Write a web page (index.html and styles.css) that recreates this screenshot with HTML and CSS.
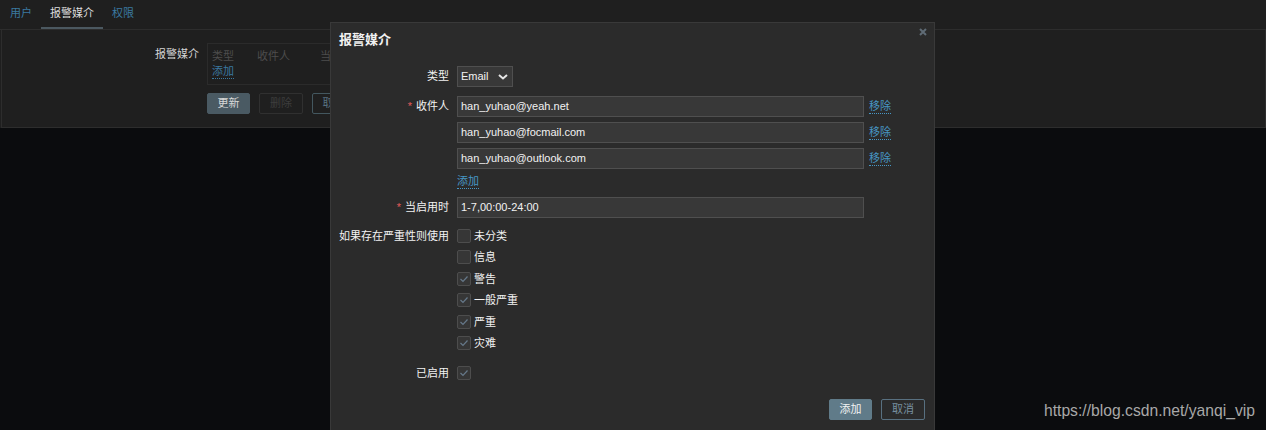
FILE: index.html
```html
<!DOCTYPE html>
<html lang="zh-CN">
<head>
<meta charset="utf-8">
<title>报警媒介</title>
<link rel="stylesheet" href="styles.css">
</head>
<body>
<div class="top">
  <div class="tabs">
    <a class="tab">用户</a><a class="tab active">报警媒介</a><a class="tab">权限</a>
  </div>
  <div class="tab-panel">
    <div class="bg-row">
      <div class="bg-label">报警媒介</div>
      <div class="bg-field">
        <div class="bg-table">
          <div class="bg-head"><span class="c1">类型</span><span class="c2">收件人</span><span class="c3">当启用时</span></div>
          <div><a class="link dim">添加</a></div>
        </div>
        <div class="bg-buttons">
          <button class="btn primary dimbtn">更新</button>
          <button class="btn disabled">删除</button>
          <button class="btn alt dimalt">取消</button>
        </div>
      </div>
    </div>
  </div>
</div>

<div class="modal">
  <div class="modal-head">
    <h4 class="modal-title">报警媒介</h4>
    <svg class="close" width="8" height="8" viewBox="0 0 8 8"><path d="M1 1L7 7M7 1L1 7" stroke="#5f6b75" stroke-width="2" fill="none"/></svg>
  </div>
  <div class="modal-body">
    <div class="row">
      <div class="label">类型</div>
      <div class="field">
        <div class="select"><span>Email</span>
          <svg width="10" height="6" viewBox="0 0 10 6"><path d="M1 1L5 4.5L9 1" stroke="#e6e6e6" stroke-width="2" fill="none"/></svg>
        </div>
      </div>
    </div>
    <div class="row mt9">
      <div class="label"><span class="req">*</span>收件人</div>
      <div class="field">
        <div class="inputs">
          <div class="input-line"><div class="input">han_yuhao@yeah.net</div><a class="link">移除</a></div>
          <div class="input-line"><div class="input">han_yuhao@focmail.com</div><a class="link">移除</a></div>
          <div class="input-line"><div class="input">han_yuhao@outlook.com</div><a class="link">移除</a></div>
        </div>
        <div class="add-line"><a class="link">添加</a></div>
      </div>
    </div>
    <div class="row mt8">
      <div class="label"><span class="req">*</span>当启用时</div>
      <div class="field"><div class="input">1-7,00:00-24:00</div></div>
    </div>
    <div class="row mt11">
      <div class="label short">如果存在严重性则使用</div>
      <div class="field">
        <div class="checks">
          <label class="check"><span class="box"></span>未分类</label>
          <label class="check"><span class="box"></span>信息</label>
          <label class="check"><span class="box"><svg width="14" height="14" viewBox="0 0 14 14"><path d="M3.5 7L6 9.5L10.5 4.5" stroke="#66798a" stroke-width="1.2" fill="none"/></svg></span>警告</label>
          <label class="check"><span class="box"><svg width="14" height="14" viewBox="0 0 14 14"><path d="M3.5 7L6 9.5L10.5 4.5" stroke="#66798a" stroke-width="1.2" fill="none"/></svg></span>一般严重</label>
          <label class="check"><span class="box"><svg width="14" height="14" viewBox="0 0 14 14"><path d="M3.5 7L6 9.5L10.5 4.5" stroke="#66798a" stroke-width="1.2" fill="none"/></svg></span>严重</label>
          <label class="check"><span class="box"><svg width="14" height="14" viewBox="0 0 14 14"><path d="M3.5 7L6 9.5L10.5 4.5" stroke="#66798a" stroke-width="1.2" fill="none"/></svg></span>灾难</label>
        </div>
      </div>
    </div>
    <div class="row mt16">
      <div class="label short">已启用</div>
      <div class="field">
        <label class="check"><span class="box"><svg width="14" height="14" viewBox="0 0 14 14"><path d="M3.5 7L6 9.5L10.5 4.5" stroke="#66798a" stroke-width="1.2" fill="none"/></svg></span></label>
      </div>
    </div>
    <div class="footer">
      <button class="btn primary w43">添加</button>
      <button class="btn alt w44">取消</button>
    </div>
  </div>
</div>

<div class="watermark">https://blog.csdn.net/yanqi_vip</div>
</body>
</html>
```
FILE: styles.css
```css
html, body {
  margin: 0;
  padding: 0;
}
body {
  width: 1266px;
  height: 430px;
  overflow: hidden;
  background: #0b0c0e;
  color: #f2f2f2;
  font-family: "Liberation Sans", "Noto Sans CJK SC", sans-serif;
  font-size: 11px;
  position: relative;
}

/* background page */
.top {
  background: #1f1f1f;
  height: 128px;
  box-sizing: border-box;
}
.tabs {
  display: flex;
  height: 29px;
  border-bottom: 1px solid #2d2d2d;
  padding-left: 1px;
}
.tab {
  display: block;
  padding: 0 9px;
  height: 29px;
  box-sizing: border-box;
  line-height: 27px;
  color: #3b7aa1;
  border-bottom: 2px solid transparent;
}
.tab.active {
  color: #dcdcdc;
  border-bottom-color: #4b5860;
}
.tab-panel {
  margin-left: 1px;
  height: 98px;
  box-sizing: border-box;
  border: 1px solid #2d2d2d;
  border-top: 0;
  padding-top: 13px;
}
.bg-row {
  display: grid;
  grid-template-columns: 197px 1fr;
  column-gap: 8px;
}
.bg-label {
  text-align: right;
  line-height: 20px;
  color: #d4d4d4;
  padding-top: 1px;
}
.bg-table {
  width: 400px;
  border: 1px solid #2b2b2b;
  padding: 4px 4px 5px;
}
.bg-head {
  display: flex;
  line-height: 16px;
  color: #4d4d4d;
}
.bg-head .c1 { width: 45px; }
.bg-head .c2 { width: 63px; }
.bg-head .c3 { width: 60px; }
.bg-buttons {
  display: flex;
  gap: 9px;
  margin-top: 8px;
}

/* links */
.link {
  color: #4796c4;
  border-bottom: 1px dotted #4796c4;
  line-height: 14px;
  display: inline-block;
  cursor: pointer;
}
.link.dim {
  color: #3a78a0;
  border-bottom-color: #3a78a0;
}

/* buttons */
.btn {
  height: 21px;
  width: 43px;
  padding: 0;
  border-radius: 2px;
  font-family: inherit;
  font-size: 11px;
  line-height: 19px;
  box-sizing: border-box;
  border: 1px solid transparent;
}
.btn.primary {
  background: #607b89;
  border-color: #607b89;
  color: #f2f2f2;
}
.btn.alt {
  background: transparent;
  border-color: #587080;
  color: #7890a0;
}
.btn.dimbtn {
  background: #4a5a63;
  border-color: #4a5a63;
  color: #d8d8d8;
}
.btn.dimalt {
  border-color: #43575f;
  color: #587080;
}
.btn.disabled {
  background: transparent;
  border-color: #303030;
  color: #3d3d3d;
  width: 44px;
}
.w43 { width: 43px; }
.w44 { width: 44px; }

/* modal */
.modal {
  position: absolute;
  left: 330px;
  top: 22px;
  width: 605px;
  height: 408px;
  box-sizing: border-box;
  background: #2b2b2b;
  border: 1px solid #393939;
  border-bottom: 0;
  overflow: hidden;
}
.modal-head {
  display: flex;
  justify-content: space-between;
  align-items: flex-start;
  padding: 9px 7px 0 8px;
}
.modal-title {
  margin: 0;
  font-size: 13px;
  font-weight: bold;
  line-height: 16px;
  color: #f2f2f2;
}
.close {
  margin-top: -4px;
}
.modal-body {
  padding-top: 18px;
}
.row {
  display: grid;
  grid-template-columns: 118px 1fr;
  column-gap: 8px;
}
.mt8 { margin-top: 8px; }
.mt9 { margin-top: 9px; }
.mt11 { margin-top: 11px; }
.mt16 { margin-top: 16px; }
.label {
  text-align: right;
  line-height: 21px;
  white-space: nowrap;
}
.label.short {
  line-height: 14px;
}
.req {
  color: #e45959;
  margin-right: 4px;
}
.select {
  width: 56px;
  height: 21px;
  box-sizing: border-box;
  background: #383838;
  border: 1px solid #4f4f4f;
  display: flex;
  align-items: center;
  justify-content: space-between;
  padding: 0 4px 0 3px;
  line-height: 19px;
}
.inputs {
  display: flex;
  flex-direction: column;
  gap: 5px;
}
.input-line {
  display: flex;
  align-items: center;
  gap: 5px;
}
.input {
  width: 407px;
  height: 21px;
  box-sizing: border-box;
  background: #383838;
  border: 1px solid #4f4f4f;
  padding: 0 3px;
  line-height: 19px;
  color: #f2f2f2;
}
.add-line {
  margin-top: 5px;
  height: 15px;
}
.checks {
  display: flex;
  flex-direction: column;
  gap: 7.4px;
}
.check {
  display: flex;
  align-items: center;
  gap: 3px;
  height: 14px;
  line-height: 14px;
}
.box {
  width: 14px;
  height: 14px;
  box-sizing: border-box;
  background: #363636;
  border: 1px solid #4d4d4d;
  border-radius: 2px;
  display: block;
  position: relative;
}
.box svg {
  position: absolute;
  left: -1px;
  top: -1px;
}
.footer {
  display: flex;
  justify-content: flex-end;
  gap: 9px;
  padding-right: 9px;
  margin-top: 19px;
}

.watermark {
  position: absolute;
  right: 11px;
  top: 402px;
  font-size: 15.7px;
  line-height: 18px;
  color: #a8a8a8;
  font-family: "Liberation Sans", sans-serif;
}
```
